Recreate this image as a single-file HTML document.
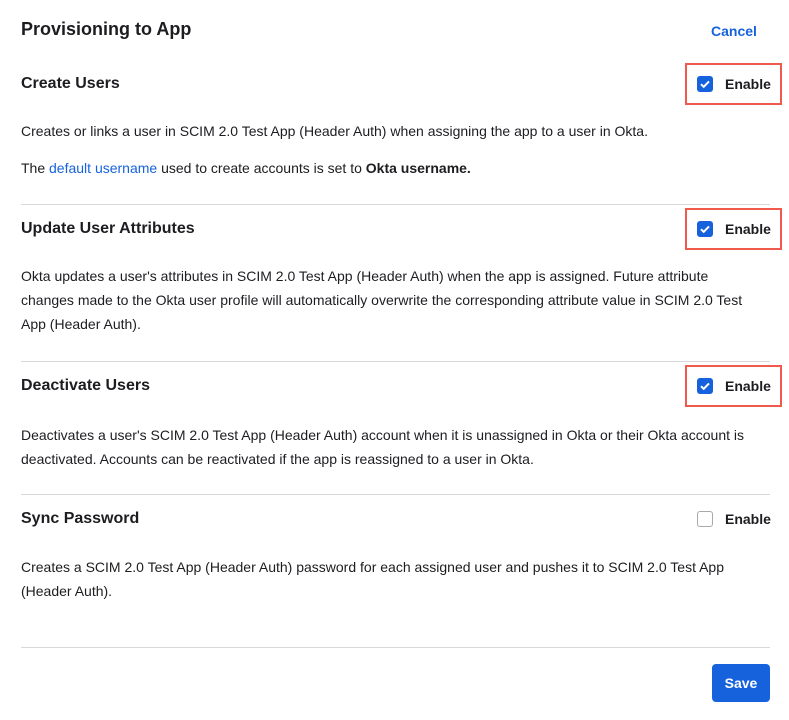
<!DOCTYPE html><html><head><style>
body{margin:0;width:789px;height:720px;background:#fff;font-family:"Liberation Sans",sans-serif;color:#1d1d21;position:relative;overflow:hidden}
.a{position:absolute;white-space:nowrap}
.h{font-size:16px;font-weight:bold;left:21px;line-height:20px}
.p{font-size:14px;left:21px;line-height:24px;white-space:normal;width:760px}
.hr{position:absolute;left:21px;width:749px;height:1px;background:#d7d7dc}
.box{position:absolute;left:685px;width:93px;height:38px;border:2px solid #ef5a4c}
.cb{position:absolute;left:697px;width:16px;height:16px;border-radius:3px;background:#1662dd}
.cb svg{position:absolute;left:1px;top:1px}
.cb.off{background:#fff;border:1px solid #a7a7ae;width:14px;height:14px}
.en{position:absolute;left:725px;font-size:14px;font-weight:bold;line-height:20px}
a{color:#1662dd;text-decoration:none}
</style></head><body>
<div class="a" style="left:21px;top:17px;font-size:18px;font-weight:bold;line-height:24px">Provisioning to App</div>
<div class="a" style="left:711px;top:21px;font-size:14px;font-weight:bold;color:#1662dd;line-height:20px">Cancel</div>

<div class="a h" style="top:74px">Create Users</div>
<div class="box" style="top:63px"></div>
<div class="cb" style="top:76px"><svg width="14" height="14" viewBox="0 0 14 14"><path d="M3 7.2l2.7 2.6 5.3-5.4" stroke="#fff" stroke-width="2" fill="none"/></svg></div>
<div class="en" style="top:74px">Enable</div>
<div class="a p" style="top:119px">Creates or links a user in SCIM 2.0 Test App (Header Auth) when assigning the app to a user in Okta.</div>
<div class="a p" style="top:156px">The <a>default username</a> used to create accounts is set to <b>Okta username.</b></div>
<div class="hr" style="top:204px"></div>

<div class="a h" style="top:219px">Update User Attributes</div>
<div class="box" style="top:208px"></div>
<div class="cb" style="top:221px"><svg width="14" height="14" viewBox="0 0 14 14"><path d="M3 7.2l2.7 2.6 5.3-5.4" stroke="#fff" stroke-width="2" fill="none"/></svg></div>
<div class="en" style="top:219px">Enable</div>
<div class="a p" style="top:264px;width:735px">Okta updates a user's attributes in SCIM 2.0 Test App (Header Auth) when the app is assigned. Future attribute changes made to the Okta user profile will automatically overwrite the corresponding attribute value in SCIM 2.0 Test App (Header Auth).</div>
<div class="hr" style="top:361px"></div>

<div class="a h" style="top:376px">Deactivate Users</div>
<div class="box" style="top:365px"></div>
<div class="cb" style="top:378px"><svg width="14" height="14" viewBox="0 0 14 14"><path d="M3 7.2l2.7 2.6 5.3-5.4" stroke="#fff" stroke-width="2" fill="none"/></svg></div>
<div class="en" style="top:376px">Enable</div>
<div class="a p" style="top:423px;width:760px">Deactivates a user's SCIM 2.0 Test App (Header Auth) account when it is unassigned in Okta or their Okta account is deactivated. Accounts can be reactivated if the app is reassigned to a user in Okta.</div>
<div class="hr" style="top:494px"></div>

<div class="a h" style="top:509px">Sync Password</div>
<div class="cb off" style="top:511px"></div>
<div class="en" style="top:509px">Enable</div>
<div class="a p" style="top:555px;width:750px">Creates a SCIM 2.0 Test App (Header Auth) password for each assigned user and pushes it to SCIM 2.0 Test App (Header Auth).</div>
<div class="hr" style="top:647px"></div>

<div class="a" style="left:712px;top:664px;width:58px;height:38px;background:#1662dd;border-radius:4px;color:#fff;font-size:14px;font-weight:bold;line-height:38px;text-align:center">Save</div>
</body></html>
